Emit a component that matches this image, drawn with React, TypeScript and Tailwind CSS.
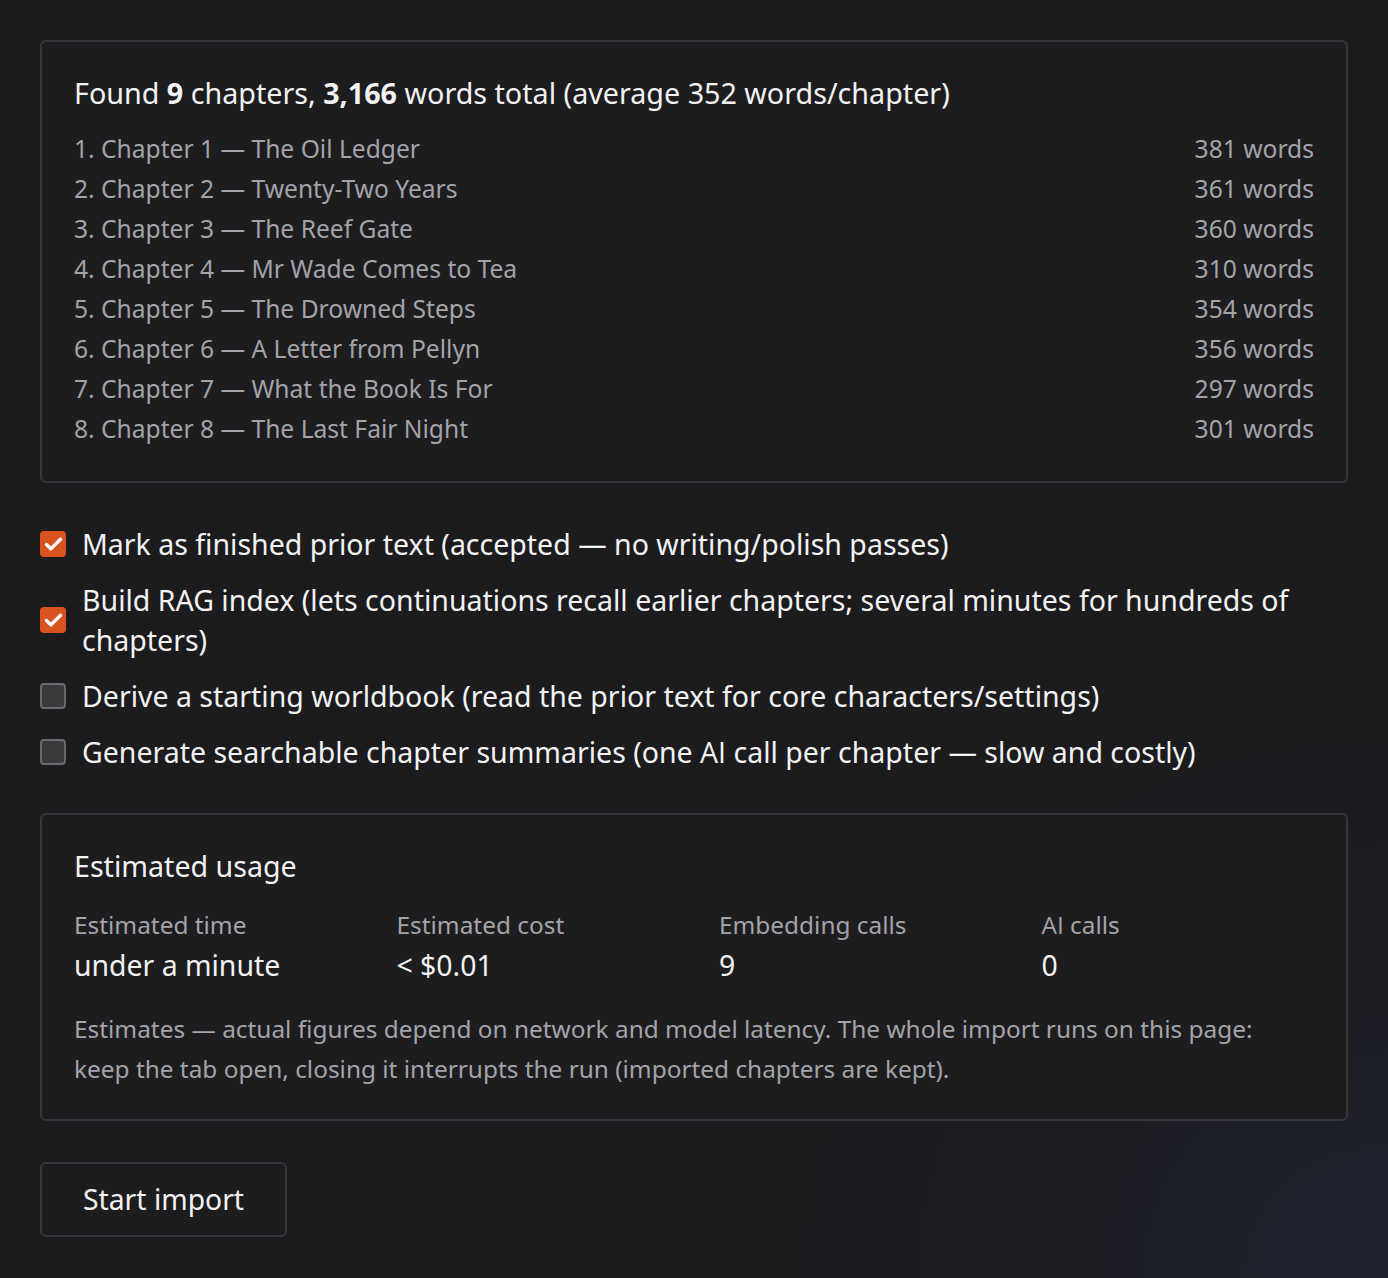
import { Check } from 'lucide-react';
import { ReactNode } from 'react';

// Noto Sans draws a serifed capital I; the reference uses a plain one.
const AI = () => <span style={{ fontFamily: '"Open Sans", sans-serif' }}>AI</span>;

const chapters = [
  { title: 'Chapter 1 — The Oil Ledger', words: 381 },
  { title: 'Chapter 2 — Twenty-Two Years', words: 361 },
  { title: 'Chapter 3 — The Reef Gate', words: 360 },
  { title: 'Chapter 4 — Mr Wade Comes to Tea', words: 310 },
  { title: 'Chapter 5 — The Drowned Steps', words: 354 },
  { title: 'Chapter 6 — A Letter from Pellyn', words: 356 },
  { title: 'Chapter 7 — What the Book Is For', words: 297 },
  { title: 'Chapter 8 — The Last Fair Night', words: 301 },
];

const options: { key: string; label: ReactNode; checked: boolean }[] = [
  { key: 'finished', label: 'Mark as finished prior text (accepted — no writing/polish passes)', checked: true },
  {
    key: 'rag',
    label:
      'Build RAG index (lets continuations recall earlier chapters; several minutes for hundreds of chapters)',
    checked: true,
  },
  {
    key: 'worldbook',
    label: 'Derive a starting worldbook (read the prior text for core characters/settings)',
    checked: false,
  },
  {
    key: 'summaries',
    label: (
      <>
        Generate searchable chapter summaries (one <AI /> call per chapter — slow and costly)
      </>
    ),
    checked: false,
  },
];

const stats: { label: ReactNode; value: string }[] = [
  { label: 'Estimated time', value: 'under a minute' },
  { label: 'Estimated cost', value: '< $0.01' },
  { label: 'Embedding calls', value: '9' },
  {
    label: (
      <>
        <AI /> calls
      </>
    ),
    value: '0',
  },
];

const Checkbox = ({ checked }: { checked: boolean }) =>
  checked ? (
    <span className="flex h-[26px] w-[26px] shrink-0 items-center justify-center rounded-[4px] bg-[#d9531e]">
      <Check className="h-[21px] w-[21px] text-white" strokeWidth={4} />
    </span>
  ) : (
    <span className="h-[26px] w-[26px] shrink-0 rounded-[4px] border-2 border-[#6a6a6e] bg-[#3a3a3d]" />
  );

export default function App() {
  return (
    <div
      className="min-h-[1278px] bg-[#1c1c1f] bg-[radial-gradient(ellipse_at_100%_100%,#202230_0%,#1d1e24_15%,#1c1c1f_30%)] px-10 pt-10 pb-10 text-[#f2f2f3]"
      style={{ fontFamily: '"Noto Sans", "Open Sans", sans-serif' }}
    >
      {/* Chapter summary */}
      <section className="rounded-md border-2 border-[#36363a] bg-[#1d1d20] px-[32px] pt-[32px] pb-[32px]">
        <h2 className="text-[28.7px] leading-[38px]">
          Found <b className="font-bold">9</b> chapters, <b className="font-bold">3,166</b> words total (average 352
          words/chapter)
        </h2>
        <ul className="mt-[17px] text-[24.6px] leading-[40px] text-[#a3a3aa]">
          {chapters.map((c, i) => (
            <li key={c.title} className="flex justify-between">
              <span>
                {i + 1}. {c.title}
              </span>
              <span>{c.words} words</span>
            </li>
          ))}
        </ul>
      </section>

      {/* Options */}
      <div className="mt-[41px] flex flex-col gap-4">
        {options.map((o) => (
          <label key={o.key} className="flex items-center gap-4 text-[28.5px] leading-[40px]">
            <Checkbox checked={o.checked} />
            <span>{o.label}</span>
          </label>
        ))}
      </div>

      {/* Estimated usage */}
      <section className="mt-[41px] rounded-md border-2 border-[#36363a] bg-[#1d1d20] px-[32px] pt-[32px] pb-[30px]">
        <h3 className="text-[28.6px] leading-[38px]">Estimated usage</h3>
        <div className="mt-5 grid grid-cols-4 gap-x-[50px]">
          {stats.map((s) => (
            <div key={s.value + s.label?.toString()}>
              <div className="text-[24.4px] leading-[40px] text-[#a3a3aa]">{s.label}</div>
              <div className="text-[28.4px] leading-[40px]">{s.value}</div>
            </div>
          ))}
        </div>
        <p className="mt-6 text-[24.4px] leading-[40px] text-[#a3a3aa]">
          Estimates — actual figures depend on network and model latency. The whole import runs on this page: keep
          the tab open, closing it interrupts the run (imported chapters are kept).
        </p>
      </section>

      <button className="mt-[41px] rounded-md border-2 border-[#36363a] bg-[#1d1d20] px-[41px] py-[16px] text-[28.3px] leading-[39px] text-[#f2f2f3]">
        Start import
      </button>
    </div>
  );
}
